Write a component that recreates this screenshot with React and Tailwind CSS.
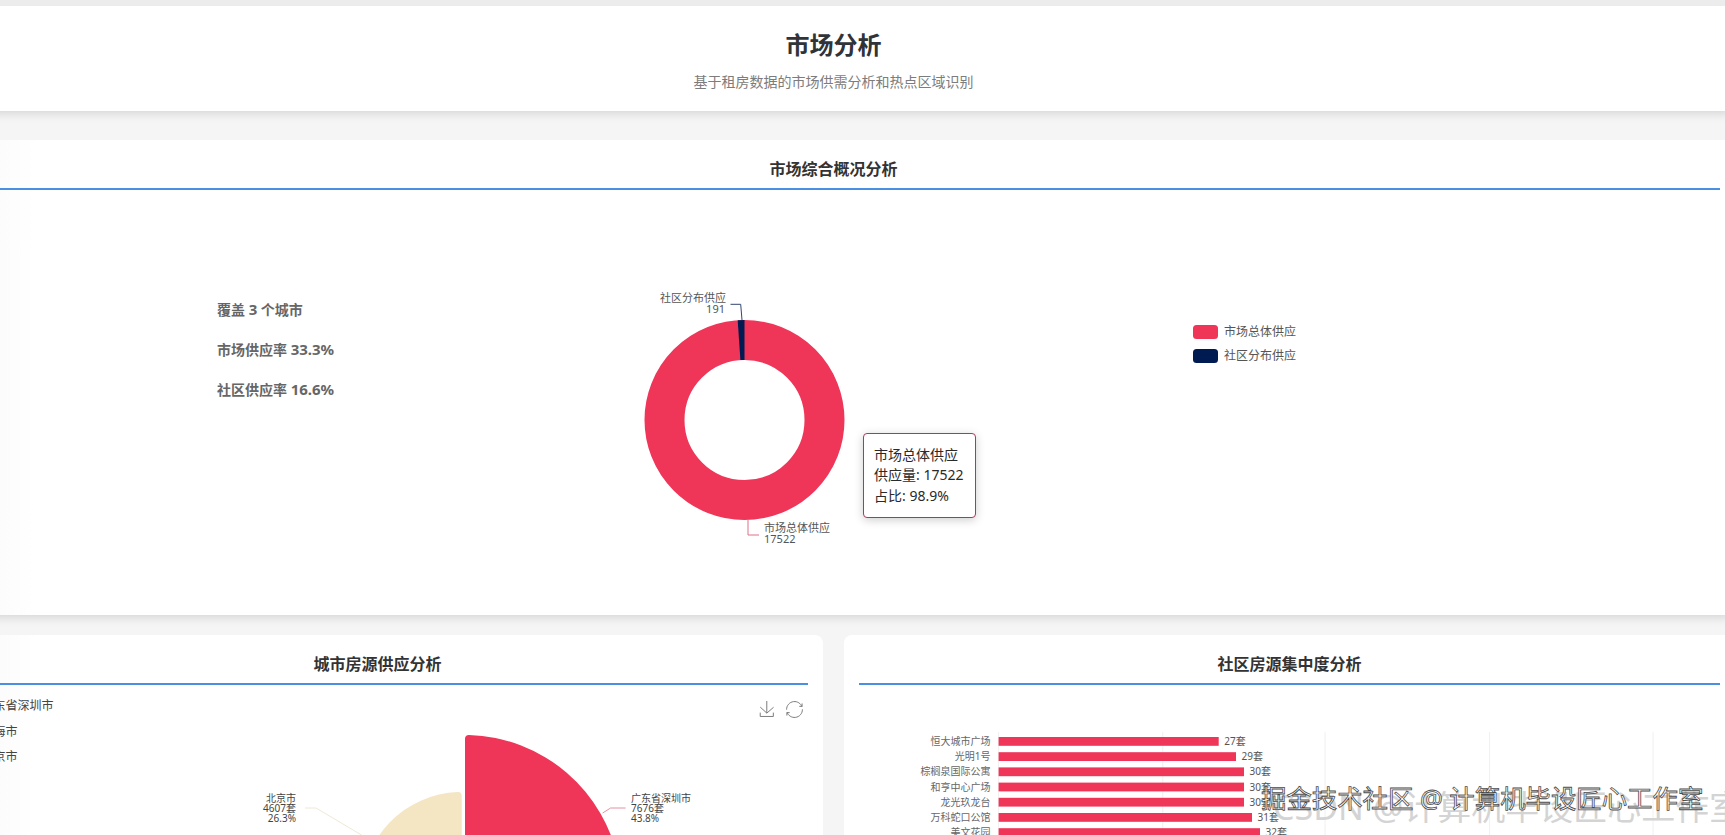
const FONT = "font-['Noto_Sans','Noto_Sans_CJK_SC',sans-serif]";

function CardTitle({ children }) {
  return (
    <h3 className="border-b-2 border-[#4a90e2] pb-[5px] text-center text-base font-bold leading-[28px] text-[#333]">
      {children}
    </h3>
  );
}

function Donut() {
  return (
    <svg className="block h-full w-full" viewBox="507 190 1213 425">
      <circle cx="744.5" cy="420" r="80" fill="none" stroke="#ef3558" strokeWidth="40" />
      <path d="M737.7 320.2 L744.5 320 L744.5 360 L740.4 360.1 Z" fill="#001a52" />
      <path d="M730.5 304.3 H740.7 L742 320" fill="none" stroke="#33456f" strokeWidth="1" />
      <path d="M748 519.5 V535 H759" fill="none" stroke="#e0708a" strokeWidth="1" />
      <text x="726" y="302" textAnchor="end" className="fill-[#555] text-[11px]">社区分布供应</text>
      <text x="725" y="313" textAnchor="end" className="fill-[#555] text-[11px]">191</text>
      <text x="764" y="532" className="fill-[#555] text-[11px]">市场总体供应</text>
      <text x="764" y="543" className="fill-[#555] text-[11px]">17522</text>
      <rect x="1193" y="325" width="25" height="14" rx="3.5" fill="#ef3558" />
      <rect x="1193" y="349" width="25" height="14" rx="3.5" fill="#001a52" />
      <text x="1224" y="336" className="fill-[#555] text-[12px]">市场总体供应</text>
      <text x="1224" y="360" className="fill-[#555] text-[12px]">社区分布供应</text>
    </svg>
  );
}

function RosePie() {
  return (
    <svg className="block h-[300px] w-full" viewBox="-53 685 861 300">
      <text x="-18.4" y="710" className="fill-[#444] text-[12px]">广东省深圳市</text>
      <text x="-18.4" y="736" className="fill-[#444] text-[12px]">上海市</text>
      <text x="-18.4" y="761" className="fill-[#444] text-[12px]">北京市</text>
      <path d="M461.7 892 V796 Q461.7 792 458 792 A100 100 0 0 0 361.7 892 Z" fill="#f4e5c3" />
      <path d="M465 892 V739 Q465 735 469 735 A157 157 0 0 1 524.6 1037 Z" fill="#ef3558" />
      <path d="M602.6 813 L610.6 808 H625.6" fill="none" stroke="#e88fa2" strokeWidth="1" />
      <path d="M305 808 H316 L361.5 835" fill="none" stroke="#efe8d6" strokeWidth="1" />
      <text x="631" y="802" className="fill-[#444] text-[10px]">广东省深圳市</text>
      <text x="631" y="812" className="fill-[#444] text-[10px]">7676套</text>
      <text x="631" y="822" className="fill-[#444] text-[10px]">43.8%</text>
      <text x="296" y="802" textAnchor="end" className="fill-[#444] text-[10px]">北京市</text>
      <text x="296" y="812" textAnchor="end" className="fill-[#444] text-[10px]">4607套</text>
      <text x="296" y="822" textAnchor="end" className="fill-[#444] text-[10px]">26.3%</text>
      <svg x="759" y="701" width="16" height="16" viewBox="0 0 60 60">
        <path d="M4.7,22.9L29.3,45.5L54.7,23.4M4.6,43.6L4.6,58L53.8,58L53.8,43.6M29.2,45.1L29.2,0" fill="none" stroke="#777" strokeWidth="3.6" />
      </svg>
      <svg x="786" y="701" width="17" height="17" viewBox="0 0 60 60">
        <path d="M47,18.9h9.8V8.7 M56.3,20.1 C52.1,9,40.5,0.6,26.8,2.1C12.6,3.7,1.6,16.2,2.1,30.6 M13,41.1H3.1v10.2 M3.7,39.9c4.2,11.1,15.8,19.5,29.5,18 c14.2-1.6,25.2-14.1,24.7-28.5" fill="none" stroke="#777" strokeWidth="3.4" />
      </svg>
    </svg>
  );
}

const BARS = [
  ["恒大城市广场", 27, 1218.7],
  ["光明1号", 29, 1236],
  ["棕榈泉国际公寓", 30, 1244],
  ["和亨中心广场", 30, 1244],
  ["龙光玖龙台", 30, 1244],
  ["万科蛇口公馆", 31, 1252],
  ["美文花园", 32, 1260],
];

function BarChart() {
  return (
    <svg className="block h-[300px] w-full" viewBox="859 685 861 300">
      {[998.6, 1162.8, 1325, 1489.6, 1653].map((x) => (
        <line key={x} x1={x} x2={x} y1="732" y2="985" stroke="#f0f0f0" strokeWidth="1" />
      ))}
      {BARS.map(([name, value, end], i) => {
        const y = 737 + i * 15.2;
        return (
          <g key={name}>
            <rect x="998.6" y={y} width={end - 998.6} height="8.8" fill="#ef3558" />
            <text x="990.5" y={y + 8} textAnchor="end" className="fill-[#666] text-[10px]">{name}</text>
            <text x={end + 5.6} y={y + 8} className="fill-[#555] text-[10px]">{value}套</text>
          </g>
        );
      })}
    </svg>
  );
}

export default function App() {
  return (
    <div className={`relative h-[835px] w-[1725px] overflow-hidden bg-[#f5f5f5] ${FONT}`}>
      <div className="h-[6px] bg-[#ececec]" />
      <div className="ml-[-68px] w-[1803px]">
        <header className="flex h-[105px] flex-col items-center bg-white pt-[22px] shadow-[0_6px_10px_-4px_rgba(0,0,0,0.14)]">
          <h1 className="text-2xl font-bold leading-[34px] text-[#303338]">市场分析</h1>
          <p className="mt-[10px] text-sm leading-[20px] text-[#7c7c7c]">基于租房数据的市场供需分析和热点区域识别</p>
        </header>

        <section className="mt-[29px] h-[475px] bg-white bg-[linear-gradient(90deg,#fbfbfb_60px,#ffffff_105px)] px-[15px] pt-[15px] shadow-[0_6px_10px_-4px_rgba(0,0,0,0.14)]">
          <CardTitle>市场综合概况分析</CardTitle>
          <div className="flex h-[425px]">
            <div className="flex w-[560px] flex-col gap-[20px] pl-[270px] pt-[110px] text-sm font-bold leading-[20px] text-[#666]">
              <p className="h-[20px]">覆盖 <span className="text-[15px] leading-none">3</span> 个城市</p>
              <p className="h-[20px]">市场供应率 <span className="text-[15px] leading-none">33.3%</span></p>
              <p className="h-[20px]">社区供应率 <span className="text-[15px] leading-none">16.6%</span></p>
            </div>
            <div className="relative flex-1">
              <Donut />
              <div className="absolute left-[356px] top-[243px] flex h-[85px] w-[113px] flex-col justify-center rounded border border-[#a83a5c] bg-white px-[10px] text-sm leading-[20.6px] text-[#2a2a2a] shadow-[0_2px_10px_rgba(0,0,0,0.2)]">
                <p className="whitespace-nowrap">市场总体供应</p>
                <p className="whitespace-nowrap">供应量: 17522</p>
                <p className="whitespace-nowrap">占比: 98.9%</p>
              </div>
            </div>
          </div>
        </section>

        <div className="mt-[20px] grid grid-cols-2 gap-[21px]">
          <div className="h-[400px] rounded-lg bg-white bg-[linear-gradient(90deg,#fbfbfb_60px,#ffffff_105px)] px-[15px] pt-[15px]">
            <CardTitle>城市房源供应分析</CardTitle>
            <RosePie />
          </div>
          <div className="h-[400px] rounded-lg bg-white px-[15px] pt-[15px]">
            <CardTitle>社区房源集中度分析</CardTitle>
            <BarChart />
          </div>
        </div>
      </div>

      <span className="absolute left-[1273px] top-[785px] whitespace-nowrap text-[34px] leading-[44px] text-[#d4d4d4]">CSDN @计算机毕设匠心工作室</span>
      <span className="absolute left-[1261px] top-[782px] whitespace-nowrap text-[25.4px] leading-[32px] text-white [-webkit-text-stroke:0.8px_#4a4a4a]">掘金技术社区 @ 计算机毕设匠心工作室</span>
    </div>
  );
}
